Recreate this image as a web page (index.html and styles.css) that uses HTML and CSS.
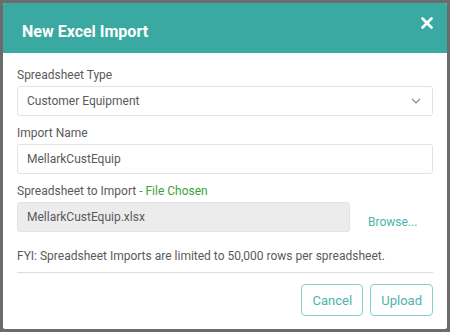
FILE: index.html
```html
<!DOCTYPE html>
<html lang="en">
<head>
    <meta charset="UTF-8">
    <title>New Excel Import</title>
    <link rel="stylesheet" href="styles.css">
</head>
<body>
    <div class="modal">
        <header class="modal-header">
            <h1>New Excel Import</h1>
            <svg class="close" width="12" height="12" viewBox="0 0 12 12"><path d="M1.5 1.5l9 9M10.5 1.5l-9 9" stroke="#fff" stroke-width="2.6" stroke-linecap="round"/></svg>
        </header>

        <div class="modal-body">
            <div class="field">
                <label>Spreadsheet Type</label>
                <div class="input select">
                    <span>Customer Equipment</span>
                    <svg width="10" height="6" viewBox="0 0 10 6"><path d="M1 1l4 4 4-4" fill="none" stroke="#888" stroke-width="1.2"/></svg>
                </div>
            </div>

            <div class="field">
                <label>Import Name</label>
                <div class="input">MellarkCustEquip</div>
            </div>

            <div class="field">
                <label>Spreadsheet to Import <span class="chosen">- File Chosen</span></label>
                <div class="file-row">
                    <div class="input disabled">MellarkCustEquip.xlsx</div>
                    <a class="browse">Browse...</a>
                </div>
            </div>

            <p class="note">FYI: Spreadsheet Imports are limited to 50,000 rows per spreadsheet.</p>
        </div>

        <footer class="modal-footer">
            <button>Cancel</button>
            <button>Upload</button>
        </footer>
    </div>
</body>
</html>
```

FILE: styles.css
```css
:root {
    --teal: #3aa9a1;
    --teal-light: #86d2cb;
    --text: #5a5a5a;
    --border: #e3e3e3;
}

* {
    margin: 0;
    padding: 0;
    box-sizing: border-box;
}

body {
    font-family: Roboto, 'Liberation Sans', sans-serif;
    background-color: #6b6b6b;
    padding: 3px;
    width: 450px;
    height: 332px;
    overflow: hidden;
}

.modal {
    background-color: #fff;
    width: 444px;
    height: 326px;
    border-radius: 2px;
    overflow: hidden;
}

.modal-header {
    background-color: var(--teal);
    height: 50px;
    display: flex;
    justify-content: space-between;
    align-items: flex-start;
    padding: 0 14px 0 19px;
    color: #fff;
}

.modal-header h1 {
    font-size: 16px;
    font-weight: 700;
    line-height: 50px;
    padding-top: 4px;
}

.close {
    margin-top: 14px;
}

.modal-body {
    padding: 14px 14px 0 14px;
}

.field {
    margin-bottom: 9px;
}

label {
    display: block;
    font-size: 12px;
    color: var(--text);
    line-height: 16px;
    margin-bottom: 3px;
}

.chosen {
    color: #3aa33a;
}

.input {
    height: 30px;
    border: 1px solid var(--border);
    border-radius: 3px;
    font-size: 12px;
    color: var(--text);
    padding: 0 9px;
    display: flex;
    align-items: center;
}

.select {
    justify-content: space-between;
    padding-right: 11px;
}

.file-row {
    display: flex;
    align-items: center;
    gap: 18px;
}

.disabled {
    width: 333px;
    background-color: #ececec;
}

.browse {
    font-size: 12px;
    color: #4ab4ac;
    padding-top: 10px;
}

.note {
    font-size: 12px;
    color: var(--text);
    margin-top: 17px;
    padding-bottom: 9px;
    border-bottom: 1px solid #ddd;
}

.modal-footer {
    display: flex;
    justify-content: flex-end;
    gap: 7px;
    padding: 11px 14px 0 0;
}

button {
    font-family: inherit;
    height: 32px;
    padding: 0 10px;
    min-width: 62px;
    background-color: #fff;
    border: 1px solid var(--teal-light);
    border-radius: 4px;
    color: #4ab4ac;
    font-size: 13px;
}
```
